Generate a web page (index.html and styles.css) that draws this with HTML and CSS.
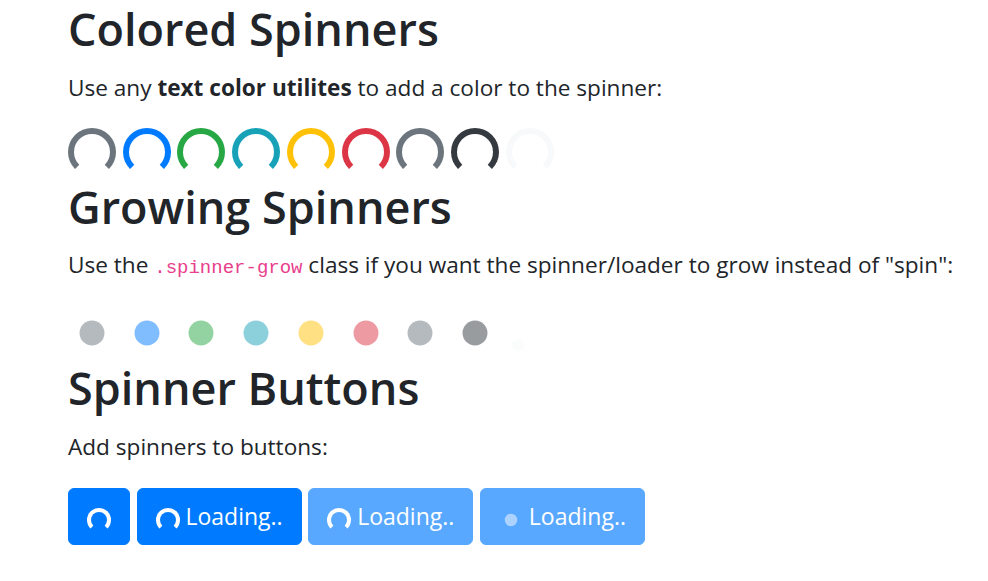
FILE: index.html
```html
<!DOCTYPE html>
<html lang="en">
<head>
<meta charset="UTF-8">
<meta name="viewport" content="width=device-width, initial-scale=1.0">
<title>Spinners</title>
<link rel="stylesheet" href="styles.css">
</head>
<body>
<div class="container">
    <h2>Colored Spinners</h2>
    <p>Use any <b>text color utilites</b> to add a color to the spinner:</p>
    <div class="row-spin">
        <div class="spinner-border text-muted"></div>
        <div class="spinner-border text-primary"></div>
        <div class="spinner-border text-success"></div>
        <div class="spinner-border text-info"></div>
        <div class="spinner-border text-warning"></div>
        <div class="spinner-border text-danger"></div>
        <div class="spinner-border text-secondary"></div>
        <div class="spinner-border text-dark"></div>
        <div class="spinner-border text-light"></div>
    </div>

    <h2>Growing Spinners</h2>
    <p>Use the <code>.spinner-grow</code> class if you want the spinner/loader to grow instead of "spin":</p>
    <div class="row-spin row-grow">
        <div class="spinner-grow text-muted"></div>
        <div class="spinner-grow text-primary"></div>
        <div class="spinner-grow text-success"></div>
        <div class="spinner-grow text-info"></div>
        <div class="spinner-grow text-warning"></div>
        <div class="spinner-grow text-danger"></div>
        <div class="spinner-grow text-secondary"></div>
        <div class="spinner-grow text-dark"></div>
        <div class="spinner-grow spinner-grow-sm text-light"></div>
    </div>

    <h2>Spinner Buttons</h2>
    <p>Add spinners to buttons:</p>
    <div class="btn-row">
        <button class="btn"><span class="spinner-border spinner-border-sm"></span></button>
        <button class="btn"><span class="spinner-border spinner-border-sm"></span> Loading..</button>
        <button class="btn" disabled><span class="spinner-border spinner-border-sm"></span> Loading..</button>
        <button class="btn" disabled><span class="spinner-grow spinner-grow-sm"></span> Loading..</button>
    </div>
</div>
</body>
</html>
```
FILE: styles.css
```css
body {
    margin: 0;
    font-family: "Open Sans", "Noto Sans", sans-serif;
    font-size: 22.6px;
    line-height: 36px;
    color: #212529;
    background: #fff;
}
.container {
    padding: 0 0 0 68px;
}
h2 {
    margin: 0 0 12px;
    font-size: 45px;
    font-weight: 600;
    line-height: 57.6px;
}
p {
    margin: 0 0 24px;
}
b {
    font-weight: bold;
}
code {
    font-family: "Liberation Mono", "DejaVu Sans Mono", monospace;
    font-size: 19px;
    color: #e83e8c;
}

.text-muted { color: #6c757d; }
.text-primary { color: #007bff; }
.text-success { color: #28a745; }
.text-info { color: #17a2b8; }
.text-warning { color: #ffc107; }
.text-danger { color: #dc3545; }
.text-secondary { color: #6c757d; }
.text-dark { color: #343a40; }
.text-light { color: #f8f9fa; }

.row-spin {
    height: 50px;
    margin-top: -2px;
    font-size: 24px;
    word-spacing: 0.5px;
}
.row-grow {
    margin-top: -1px;
}
.spinner-border {
    display: inline-block;
    width: 48px;
    height: 48px;
    vertical-align: text-bottom;
    border: 6px solid currentColor;
    border-right-color: transparent;
    border-radius: 50%;
    box-sizing: border-box;
    transform: rotate(90deg);
}
.spinner-border-sm {
    width: 24px;
    height: 24px;
    border-width: 4px;
}
.spinner-grow {
    display: inline-block;
    width: 48px;
    height: 48px;
    vertical-align: text-bottom;
    background-color: currentColor;
    border-radius: 50%;
    opacity: 0.5;
    transform: scale(0.52);
}
.spinner-grow-sm {
    width: 24px;
    height: 24px;
}

.btn-row {
    display: flex;
    gap: 6.5px;
    margin-top: -1px;
}
.btn {
    margin: 0;
    padding: 9px 18px;
    font-family: inherit;
    font-size: 23px;
    line-height: 37px;
    color: #fff;
    background-color: #007bff;
    border: 1px solid #007bff;
    border-radius: 6px;
}
.btn:disabled {
    opacity: 0.65;
}
```
